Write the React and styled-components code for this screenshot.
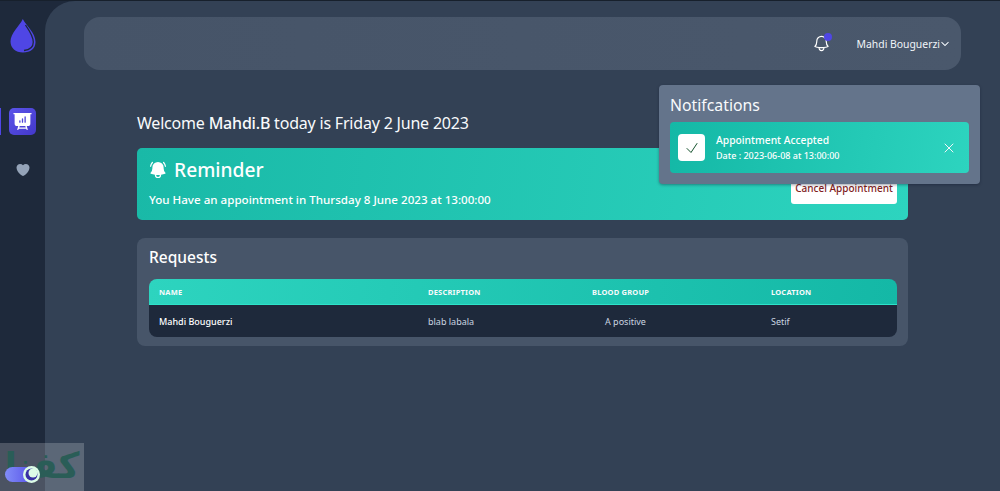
import React from "react";
import styled, { createGlobalStyle } from "styled-components";
import {
  HiBellAlert,
  HiPresentationChartBar,
  HiHeart,
  HiOutlineBell,
  HiChevronDown,
  HiOutlineXMark,
  HiOutlineCheck,
} from "react-icons/hi2";

const Global = createGlobalStyle`
  html, body { margin: 0; padding: 0; height: 100%; background: #1e293b; overflow: hidden; }
  #root { height: 100%; }
  * { box-sizing: border-box; }
  body { font-family: "Noto Sans", "Open Sans", sans-serif; color: #fff; }
`;

const Page = styled.div`
  position: relative;
  display: flex;
  width: 1000px;
  height: 491px;
  background: #1e293b;
  border-top: 1px solid #17202c;
  overflow: hidden;
`;

const Sidebar = styled.aside`
  position: relative;
  width: 45px;
  flex: none;
  display: flex;
  flex-direction: column;
  align-items: center;
  padding-top: 18px;
`;

const Logo = styled.svg`
  width: 26px;
  height: 34px;
  margin-bottom: 55px;
`;

const ActiveMark = styled.span`
  position: absolute;
  left: 0;
  top: 107px;
  width: 1px;
  height: 27px;
  background: #4f46e5;
`;

const NavIcon = styled.div`
  width: 27px;
  height: 27px;
  border-radius: 5px;
  display: flex;
  align-items: center;
  justify-content: center;
  color: ${(p) => (p.$active ? "#fff" : "#94a3b8")};
  background: ${(p) => (p.$active ? "linear-gradient(135deg, #5b54ea, #4338ca)" : "transparent")};
  margin-bottom: ${(p) => (p.$active ? "21px" : "0")};
  font-size: ${(p) => (p.$active ? "21px" : "16px")};
`;

const Main = styled.main`
  flex: 1;
  min-width: 0;
  background: #334155;
  border-top-left-radius: 30px;
  padding: 16px 39px 0;
`;

const Navbar = styled.header`
  height: 53px;
  border-radius: 16px;
  background: linear-gradient(90deg, #465468, #4a586c);
  display: flex;
  align-items: center;
  justify-content: flex-end;
  padding-right: 11px;
  font-size: 10.4px;
  color: #f1f5f9;
`;

const BellWrap = styled.div`
  position: relative;
  display: flex;
  font-size: 19px;
  margin-right: 26px;
  color: #fff;
`;

const Dot = styled.span`
  position: absolute;
  top: -1px;
  right: -1px;
  width: 8px;
  height: 8px;
  border-radius: 50%;
  background: #4f46e5;
`;

const User = styled.div`
  display: flex;
  align-items: center;
  gap: 0;
  white-space: nowrap;
`;

const Content = styled.section`
  margin: 41px 53px 0;
`;

const Welcome = styled.h1`
  margin: 0 0 12px;
  font-size: 16px;
  line-height: 25px;
  font-weight: 400;
  letter-spacing: -0.2px;
  color: #f8fafc;
  b { font-weight: 500; }
`;

const Reminder = styled.div`
  position: relative;
  height: 72px;
  border-radius: 5px;
  background: linear-gradient(100deg, #19b9a7, #2dd4bf);
  padding: 8px 12px;
`;

const ReminderTitle = styled.div`
  display: flex;
  align-items: center;
  gap: 6px;
  font-size: 19.2px;
  line-height: 27px;
  font-weight: 500;
  margin-bottom: 8px;
  svg { margin-left: -1px; }
`;

const ReminderText = styled.div`
  font-size: 11.6px;
  line-height: 18px;
  font-weight: 500;
  white-space: nowrap;
`;

const CancelButton = styled.button`
  position: absolute;
  right: 11px;
  top: 24px;
  width: 106px;
  height: 32px;
  border: 0;
  border-radius: 3px;
  background: #fff;
  color: #7f1d1d;
  font: 500 10px/14px "Noto Sans", sans-serif;
  padding: 0;
`;

const Requests = styled.div`
  margin-top: 18px;
  height: 108px;
  background: #475569;
  border-radius: 8px;
  padding: 8px 11px 8px 12px;
`;

const RequestsTitle = styled.h2`
  margin: 0 0 11px;
  font-size: 15.5px;
  line-height: 22px;
  font-weight: 500;
  color: #fff;
`;

const Table = styled.div`
  border-radius: 8px;
  overflow: hidden;
`;

const Row = styled.div`
  display: grid;
  grid-template-columns: 279px 164px 179px 1fr;
  align-items: center;
`;

const HeadRow = styled(Row)`
  height: 26px;
  background: linear-gradient(95deg, #2dd4bf, #14b8a6);
  border-bottom: 1px solid #2de2c8;
  font-size: 7.5px;
  font-weight: 700;
  letter-spacing: 0.2px;
  color: #f8fafc;
`;

const BodyRow = styled(Row)`
  height: 32px;
  background: #1e293b;
  font-size: 9px;
  color: #cbd5e1;
`;

const Cell = styled.div`
  padding-left: ${(p) => p.$pad || 0}px;
  white-space: nowrap;
  color: ${(p) => (p.$strong ? "#fff" : "inherit")};
  font-weight: ${(p) => (p.$strong ? 500 : "inherit")};
`;

const NotifPanel = styled.div`
  position: absolute;
  left: 659px;
  top: 84px;
  width: 321px;
  height: 99px;
  background: #64748b;
  border-radius: 4px;
  padding: 9px 11px;
  box-shadow: 0 1px 3px rgba(15, 23, 42, 0.4);
`;

const NotifTitle = styled.div`
  font-size: 15.8px;
  line-height: 22px;
  color: #f8fafc;
  margin-bottom: 6px;
`;

const NotifCard = styled.div`
  height: 51px;
  border-radius: 4px;
  background: linear-gradient(100deg, #14b8a6, #2dd4bf);
  display: flex;
  align-items: center;
  padding: 0 12px 0 8px;
`;

const CheckBox = styled.div`
  width: 27px;
  height: 27px;
  border-radius: 4px;
  background: #fff;
  color: #14532d;
  display: flex;
  align-items: center;
  justify-content: center;
  font-size: 16px;
  margin-right: 11px;
`;

const NotifBody = styled.div`
  flex: 1;
`;

const NotifHead = styled.div`
  font-size: 10.3px;
  line-height: 15px;
  font-weight: 500;
`;

const NotifDate = styled.div`
  font-size: 9px;
  line-height: 14px;
  margin-top: 1px;
  font-weight: 500;
`;

const Close = styled.div`
  display: flex;
  font-size: 16px;
  color: #f1f5f9;
`;

const Watermark = styled.div`
  position: absolute;
  left: 0;
  top: 442px;
  width: 84px;
  height: 49px;
  background: rgba(255, 255, 255, 0.2);
  color: #2a5d57;
  font: 700 36px/46px "DejaVu Sans", sans-serif;
  text-align: center;
  white-space: nowrap;
`;

const Toggle = styled.div`
  position: absolute;
  left: 5px;
  top: 466px;
  width: 34px;
  height: 15px;
  border-radius: 8px;
  background: linear-gradient(90deg, #818cf8, #4f46e5);
`;

const Knob = styled.span`
  position: absolute;
  right: -1px;
  top: -1px;
  width: 17px;
  height: 17px;
  border-radius: 50%;
  background: #dcfce7;
  display: flex;
  align-items: center;
  justify-content: center;
`;

export default function App() {
  return (
    <Page>
      <Global />
      <Sidebar>
        <ActiveMark />
        <Logo viewBox="0 0 26 34">
          <path d="M12.800 0C16.500 7 25.500 14 25.500 23C25.500 29.500 20.500 33.500 13 33.500C5.500 33.500 .5 29 .5 22.500C.5 14 9.500 7 12.800 0z" fill="#4f46e5" />
          <path d="M15.500 6C19 11 23.300 17 23.300 23C23.300 28 19.500 31 14 31.500" fill="none" stroke="#1e293b" strokeWidth="1.3" />
        </Logo>
        <NavIcon $active>
          <HiPresentationChartBar />
        </NavIcon>
        <NavIcon>
          <HiHeart />
        </NavIcon>
      </Sidebar>
      <Main>
        <Navbar>
          <BellWrap>
            <HiOutlineBell />
            <Dot />
          </BellWrap>
          <User>
            Mahdi Bouguerzi
            <HiChevronDown size={10} strokeWidth={1.2} />
          </User>
        </Navbar>
        <Content>
          <Welcome>
            Welcome <b>Mahdi.B</b> today is Friday 2 June 2023
          </Welcome>
          <Reminder>
            <ReminderTitle>
              <HiBellAlert size={20} />
              Reminder
            </ReminderTitle>
            <ReminderText>You Have an appointment in Thursday 8 June 2023 at 13:00:00</ReminderText>
            <CancelButton>Cancel Appointment</CancelButton>
          </Reminder>
          <Requests>
            <RequestsTitle>Requests</RequestsTitle>
            <Table>
              <HeadRow>
                <Cell $pad={10}>NAME</Cell>
                <Cell>DESCRIPTION</Cell>
                <Cell>BLOOD GROUP</Cell>
                <Cell>LOCATION</Cell>
              </HeadRow>
              <BodyRow>
                <Cell $pad={10} $strong>Mahdi Bouguerzi</Cell>
                <Cell>blab labala</Cell>
                <Cell $pad={13}>A positive</Cell>
                <Cell>Setif</Cell>
              </BodyRow>
            </Table>
          </Requests>
        </Content>
      </Main>
      <NotifPanel>
        <NotifTitle>Notifcations</NotifTitle>
        <NotifCard>
          <CheckBox>
            <HiOutlineCheck />
          </CheckBox>
          <NotifBody>
            <NotifHead>Appointment Accepted</NotifHead>
            <NotifDate>Date : 2023-06-08 at 13:00:00</NotifDate>
          </NotifBody>
          <Close>
            <HiOutlineXMark />
          </Close>
        </NotifCard>
      </NotifPanel>
      <Watermark>کفنا</Watermark>
      <Toggle>
        <Knob>
          <svg width="13" height="13" viewBox="0 0 13 13">
            <circle cx="6.500" cy="6.500" r="6" fill="#3730a3" />
            <circle cx="8" cy="5" r="4.500" fill="#dcfce7" />
          </svg>
        </Knob>
      </Toggle>
    </Page>
  );
}
